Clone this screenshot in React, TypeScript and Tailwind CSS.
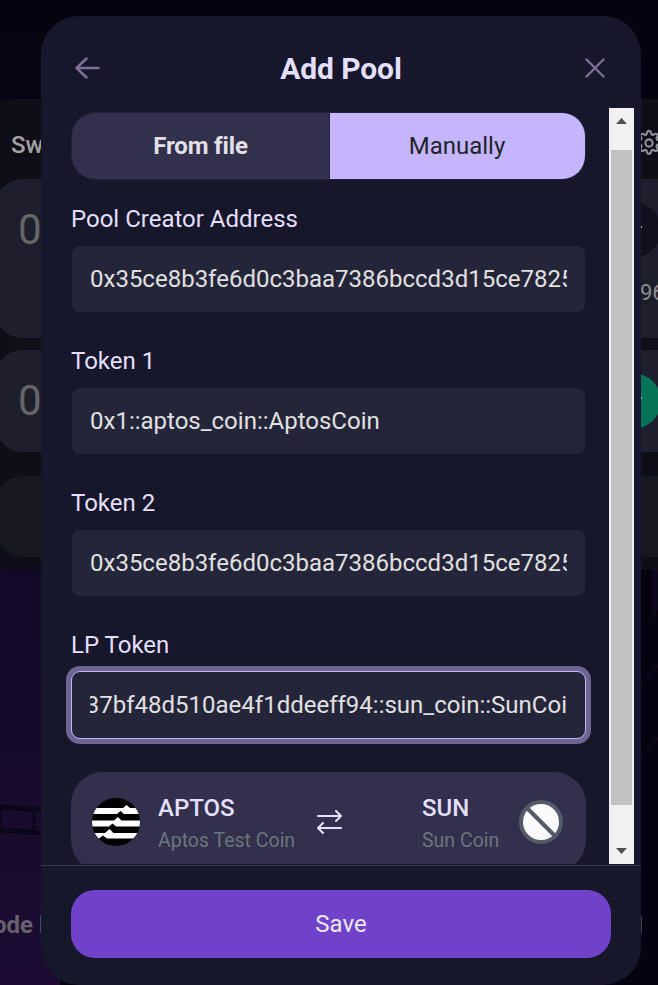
import type { ReactNode } from 'react';

const FIELDS = [
  { label: 'Pool Creator Address', value: '0x35ce8b3fe6d0c3baa7386bccd3d15ce7825b' },
  { label: 'Token 1', value: '0x1::aptos_coin::AptosCoin' },
  { label: 'Token 2', value: '0x35ce8b3fe6d0c3baa7386bccd3d15ce7825b' },
];

function Label({ children }: { children: ReactNode }) {
  return <div className="h-[40px] pt-px text-[24px] leading-[28px] text-[#e4dffc]">{children}</div>;
}

function Backdrop() {
  return (
    <div className="relative h-full w-full overflow-hidden bg-[#060310] pt-[99px]">
      <div className="absolute inset-y-0 left-0 w-[60px] bg-linear-to-b from-[#060310] via-[#120a28] via-60% to-[#1d0b31]" />
      <svg className="absolute top-[790px] left-0" width="60" height="60" fill="none" stroke="#0b061b">
        <path d="M0 17L60 21M0 40L60 44" strokeWidth="5" />
        <path d="M0 17V40M34 19V42" strokeWidth="3" />
      </svg>
      <svg className="absolute top-[570px] left-[630px]" width="28" height="220" fill="none" stroke="#0c071a">
        <path d="M5 122L28 95M5 192L28 168" strokeWidth="3" />
        <path d="M22 0V50L28 40V0Z" fill="#0c071a" stroke="none" />
      </svg>
      <div className="relative -ml-[19px] h-[471px] w-[760px] rounded-[34px] bg-[#0f0e18] px-[15px]">
        <div className="flex h-[80px] items-center justify-between pt-3 text-[24px] font-medium text-[#a3a3a1]">
          <span className="pl-[15px]">Swap</span>
          <svg className="mr-[62px] mb-[4px]" width="30" height="30" viewBox="0 0 24 24" fill="none" stroke="#8f8f98" strokeWidth="1.7">
            <circle cx="12" cy="12" r="2.900" />
            <path strokeLinejoin="round" d="M10.5 3.500a1.550 1.550 0 0 1 3 0l.3 1a1.300 1.300 0 0 0 1.900.800l.9-.5a1.550 1.550 0 0 1 2.100 2.100l-.5.900a1.300 1.300 0 0 0 .8 1.900l1 .3a1.550 1.550 0 0 1 0 3l-1 .3a1.300 1.300 0 0 0-.8 1.900l.5.900a1.550 1.550 0 0 1-2.100 2.100l-.9-.5a1.300 1.300 0 0 0-1.900.8l-.3 1a1.550 1.550 0 0 1-3 0l-.3-1a1.300 1.300 0 0 0-1.900-.8l-.9.5a1.550 1.550 0 0 1-2.100-2.100l.5-.9a1.300 1.300 0 0 0-.8-1.900l-1-.3a1.550 1.550 0 0 1 0-3l1-.3a1.300 1.300 0 0 0 .8-1.900l-.5-.9a1.550 1.550 0 0 1 2.100-2.100l.9.5a1.300 1.300 0 0 0 1.900-.8z" />
          </svg>
        </div>
        <div className="flex h-[159px] justify-between rounded-[26px] bg-[#1f1e2c] pt-[23px] pr-[65px] pl-[22px]">
          <span className="text-[42px] leading-[56px] text-[#65656a]">0</span>
          <div className="flex flex-col items-end">
            <div className="flex h-[56px] w-[150px] items-center justify-end rounded-full bg-[#11111d] pr-[19px] pb-[6px]">
              <span className="h-[2px] w-[2px] bg-[#a3a3a1]" />
            </div>
            <span className="mt-[21px] mr-[-14px] w-[35px] text-[22px] leading-[28px] text-[#8c8c90]">96</span>
          </div>
        </div>
        <div className="mt-[12px] flex h-[102px] justify-between rounded-[26px] bg-[#1f1e2c] pt-[23px] pr-[65px] pl-[22px]">
          <span className="text-[42px] leading-[56px] text-[#65656a]">0</span>
          <div className="flex h-[56px] w-[150px] items-center justify-end rounded-full bg-[#047357] pr-[19px] pb-[6px]">
            <span className="h-[2px] w-[2px] bg-[#a3c9be]" />
          </div>
        </div>
        <div className="mt-[24px] h-[81px] rounded-[26px] bg-[#17171f]" />
      </div>
      <div className="relative mt-[341px] ml-[-7px] flex justify-between text-[24px] leading-[28px] font-bold text-[#69606f]">
        <span>ode b</span>
        <span className="mt-[5px] mr-[16px] h-[17px] w-px bg-[#444150]" />
      </div>
    </div>
  );
}

function AptosLogo() {
  return (
    <svg width="48" height="48" viewBox="0 0 48 48">
      <clipPath id="aptos-disc"><circle cx="24" cy="24" r="24" /></clipPath>
      <g clipPath="url(#aptos-disc)">
        <rect width="48" height="48" fill="#000" />
        <path fill="#fff" d="M0 10H31L34.5 7L38 10H48V16H32L28.5 13L25 16H0Z" />
        <path fill="#fff" d="M0 22.500H22L26 19L29.500 22.500H48V28.500H24L20.500 25.500L17 28.500H0Z" />
        <path fill="#fff" d="M0 35H13L17.500 31L21.500 35H48V40.500H15L11 37.500L7 40.500H0Z" />
      </g>
    </svg>
  );
}

export default function App() {
  return (
    <div className="relative h-[985px] w-[658px] overflow-hidden font-[Roboto,sans-serif]">
      <Backdrop />
      <div className="absolute top-[16px] left-[41px] flex h-[969px] w-[600px] flex-col overflow-hidden rounded-[38px] bg-[#17172b]">
        <header className="flex h-[92px] items-center justify-between pt-[11px] pr-[36px] pl-[34px]">
          <svg width="25" height="22" viewBox="0 0 25 22" fill="none" stroke="#7b6e98" strokeWidth="2.5" strokeLinecap="round" strokeLinejoin="round">
            <path d="M23.500 11H1.500M11.500 1.500L1.500 11L11.500 20.500" />
          </svg>
          <h1 className="mr-[3px] pt-px text-[30px] font-bold tracking-[-0.1px] text-[#e4dffc]">Add Pool</h1>
          <svg width="20" height="20" viewBox="0 0 20 20" fill="none" stroke="#7b6e98" strokeWidth="2.400" strokeLinecap="round">
            <path d="M1.500 1.500L18.500 18.500M18.500 1.500L1.500 18.500" />
          </svg>
        </header>

        <div className="flex h-[756px] shrink-0">
          <div className="w-[568px] overflow-hidden pt-[4px] pr-[23px] pl-[30px]">
            <div className="flex h-[68px] overflow-hidden rounded-[24px] border border-[#222238] text-[24px]">
              <button className="w-[258px] border-r border-[#222238] bg-[#32304d] font-bold tracking-[-0.15px] text-[#e2e2e6]">From file</button>
              <button className="flex-1 bg-[#c4b5fd] pr-px text-[#212529]">Manually</button>
            </div>
            <div className="pt-[24px]">
              {FIELDS.map((f) => (
                <div key={f.label} className="h-[142px]">
                  <Label>{f.label}</Label>
                  <div className="mt-px h-[68px] rounded-[9px] border border-[#17172b] bg-[#25253a] px-[18px]">
                    <div className="overflow-hidden text-[24px] leading-[66px] whitespace-nowrap text-[#e0e0e0]">{f.value}</div>
                  </div>
                </div>
              ))}
              <Label>LP Token</Label>
              <div className="mt-px h-[68px] rounded-[9px] border border-[#c4b5fd] bg-[#25253a] px-[18px] ring-5 ring-[#6e6594]">
                <div className="flex justify-end overflow-hidden text-[24px] leading-[66px] whitespace-nowrap text-[#e0e0e0]">
                  <span>37bf48d510ae4f1ddeeff94::sun_coin::SunCoi</span>
                </div>
              </div>
            </div>
            <div className="mt-[33px] flex h-[100px] items-center rounded-[32px] bg-[#32304d] px-[21px]">
              <AptosLogo />
              <div className="ml-[18px] w-[159px] pt-[5px]">
                <div className="text-[24px] leading-[31px] font-medium text-[#e4dffc]">APTOS</div>
                <div className="pt-px text-[19.5px] leading-[32px] text-[#6c757d]">Aptos Test Coin</div>
              </div>
              <svg width="25" height="24" viewBox="0 0 25 24" fill="none" stroke="#e4dffc" strokeWidth="2" strokeLinecap="round" strokeLinejoin="round">
                <path d="M1 6H24M19 1L24 6L19 11M24 18H1M6 13L1 18L6 23" />
              </svg>
              <div className="ml-auto w-[97px] pt-[5px]">
                <div className="text-[24px] leading-[31px] font-medium text-[#e4dffc]">SUN</div>
                <div className="pt-px text-[19.5px] leading-[32px] text-[#6c757d]">Sun Coin</div>
              </div>
              <svg className="mr-[2px]" width="44" height="44" viewBox="0 0 44 44">
                <circle cx="22" cy="22" r="20" fill="#fafaff" stroke="#555a67" strokeWidth="4" />
                <path d="M8 8L36 36" stroke="#555a67" strokeWidth="4" />
              </svg>
            </div>
          </div>
          <div className="flex w-[25px] flex-col items-center bg-[#f1f1f1]">
            <div className="flex h-[42px] w-full justify-center pt-[10px]">
              <svg width="11" height="6" viewBox="0 0 11 6"><path d="M0 6L5.500 0L11 6Z" fill="#505050" /></svg>
            </div>
            <div className="h-[655px] w-[21px] bg-[#c1c1c1]" />
            <div className="flex flex-1 items-end pb-[10px]">
              <svg width="11" height="6" viewBox="0 0 11 6"><path d="M0 0L5.500 6L11 0Z" fill="#505050" /></svg>
            </div>
          </div>
        </div>

        <footer className="mt-px flex-1 border-t border-[#36354c] px-[30px] pt-[24px]">
          <button className="h-[68px] w-full rounded-[24px] bg-[#6f42c9] text-[24px] text-[#ece8fa]">Save</button>
        </footer>
      </div>
    </div>
  );
}
